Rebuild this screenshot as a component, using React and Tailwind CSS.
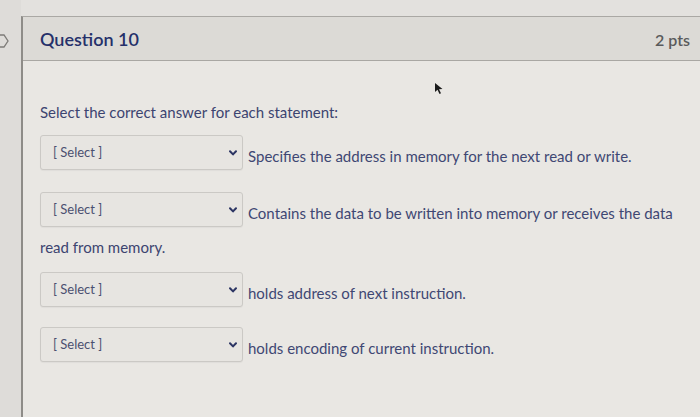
import React from "react";

function Chevron() {
  return (
    <svg width="8" height="6" viewBox="0 0 8 6" className="shrink-0">
      <path d="M1 1.2 L4 4.4 L7 1.2" fill="none" stroke="#2c3563" strokeWidth="2" strokeLinecap="round" strokeLinejoin="round" />
    </svg>
  );
}

function SelectRow({ text, className = "" }) {
  return (
    <div className={`flex items-center ${className}`}>
      <div className="w-[203px] h-[35px] flex items-center justify-between pl-[12px] pr-[5px] border border-[#cbc9c5] rounded-[3px] bg-[#e7e5e1] shadow-[0_1px_1px_rgba(0,0,0,0.04)]">
        <span className="text-[13px] text-[#4b5070]">[ Select ]</span>
        <Chevron />
      </div>
      <span className="ml-[5px] mt-[7px] text-[15px] text-[#3f4773]">{text}</span>
    </div>
  );
}

export default function App() {
  return (
    <div
      className="relative w-[700px] h-[417px] overflow-hidden flex bg-[#e3e1de]"
      style={{ fontFamily: "Lato, 'Noto Sans', sans-serif" }}
    >
      {/* left rail with flag outline */}
      <div className="w-[21px] shrink-0 relative bg-[#dedcd9]">
        <svg width="14" height="16" viewBox="0 0 14 16" className="absolute left-[-4px] top-[33px]">
          <path d="M1 2 H8 L12 8 L8 14 H1" fill="none" stroke="#7d7b78" strokeWidth="1.3" />
        </svg>
      </div>

      {/* question panel */}
      <div className="flex-1 mt-[16px] flex flex-col border-t border-[#aaa8a4] border-l-2 border-l-[#8e8c88] bg-[#e9e7e3]">
        <div className="h-[44px] shrink-0 flex items-center justify-between pl-[17px] pr-[10px] bg-[#dcdad6] border-b border-[#a9a7a3]">
          <span className="text-[18px] font-semibold text-[#25306a] mt-[2px]">Question 10</span>
          <span className="text-[16px] font-semibold text-[#5a5a5c] mt-[2px]">2 pts</span>
        </div>

        <div className="pl-[17px] flex flex-col">
          <p className="mt-[41px] text-[15px] leading-[20px] text-[#3c4470]">
            Select the correct answer for each statement:
          </p>

          <SelectRow text="Specifies the address in memory for the next read or write." className="mt-[13px]" />
          <SelectRow text="Contains the data to be written into memory or receives the data" className="mt-[22px]" />

          <p className="mt-[10px] text-[15px] leading-[20px] text-[#3c4470]">read from memory.</p>

          <SelectRow text="holds address of next instruction." className="mt-[15px]" />
          <SelectRow text="holds encoding of current instruction." className="mt-[20px]" />
        </div>
      </div>

      {/* mouse pointer */}
      <svg width="10" height="14" viewBox="0 0 10 14" className="absolute left-[434px] top-[82px]">
        <path d="M1 1 L1 10 L3.5 7.8 L5.5 12 L7 11.3 L5 7.2 L8.5 7 Z" fill="#1b1b1b" />
      </svg>
    </div>
  );
}
